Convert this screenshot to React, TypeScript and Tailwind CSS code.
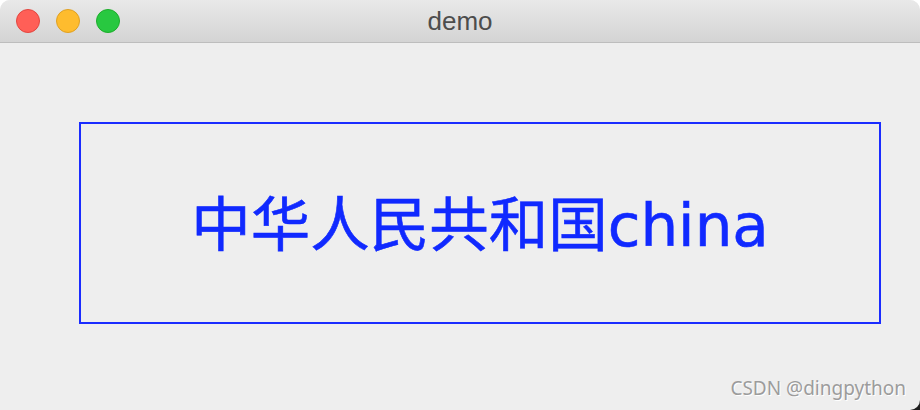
export default function App() {
  return (
    <div className="relative w-[920px] h-[410px] bg-white">
      {/* dark corner showing behind the rounded bottom-right of the window */}
      <div className="absolute right-0 bottom-0 w-[12px] h-[12px] bg-[#1e1e1e]" />
      <div className="relative flex flex-col w-full h-full rounded-t-[10px] rounded-br-[10px] overflow-hidden bg-[#eeeeee]">
        <div className="relative flex items-center h-[43px] px-[16px] bg-gradient-to-b from-[#e9e9e9] to-[#d4d4d4] border-b border-[#bdbdbd]">
          <div className="flex gap-[16px]">
            <span className="w-[24px] h-[24px] rounded-full bg-[#ff5f57] border border-[#e2463f]" />
            <span className="w-[24px] h-[24px] rounded-full bg-[#febc2e] border border-[#dfa023]" />
            <span className="w-[24px] h-[24px] rounded-full bg-[#28c840] border border-[#1dad2b]" />
          </div>
          <div className="absolute inset-0 flex items-center justify-center text-[26px] text-[#4d4d4d] font-['Liberation_Sans',sans-serif]">
            demo
          </div>
        </div>
        <div className="relative flex-1 pl-[79px] pt-[79px]">
          <div className="flex items-center justify-center w-[802px] h-[202px] border-2 border-[#1a2cff]">
            <span className="text-[59.5px] leading-none text-[#1029ff] pt-[6px] font-['DejaVu_Sans','Noto_Sans_CJK_SC',sans-serif] [-webkit-text-stroke:0.6px_#1029ff]">
              中华人民共和国china
            </span>
          </div>
          <div className="absolute right-[14px] bottom-[8px] text-[19px] text-[#9c9c9c] font-['Noto_Sans',sans-serif] [text-shadow:1px_1px_0_#ffffff]">
            CSDN @dingpython
          </div>
        </div>
      </div>
    </div>
  )
}
